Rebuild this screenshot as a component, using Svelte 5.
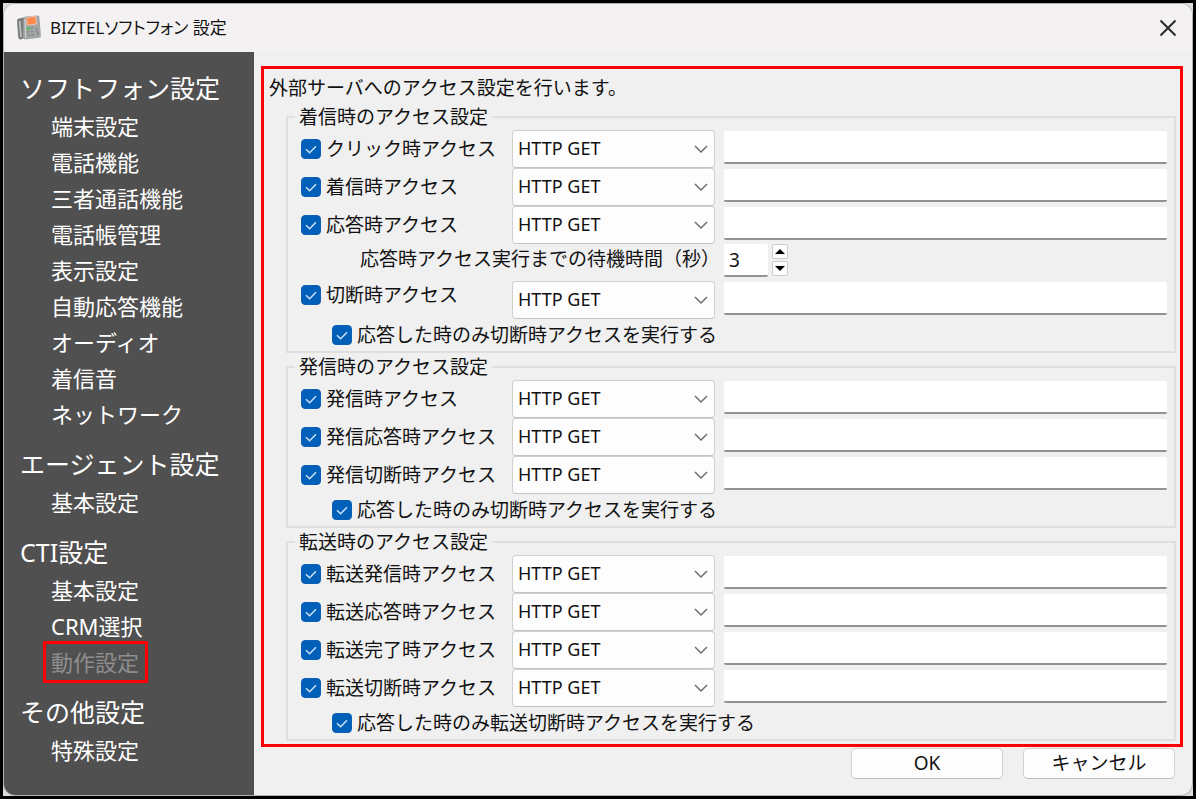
<script>
  const menu = [
    {
      title: 'ソフトフォン設定',
      items: ['端末設定', '電話機能', '三者通話機能', '電話帳管理', '表示設定', '自動応答機能', 'オーディオ', '着信音', 'ネットワーク']
    },
    { title: 'エージェント設定', items: ['基本設定'] },
    { title: 'CTI設定', items: ['基本設定', 'CRM選択', '動作設定'] },
    { title: 'その他設定', items: ['特殊設定'] }
  ];
  const current = '動作設定';

  const row = (label, extra = {}) => ({ label, on: true, method: 'HTTP GET', url: '', ...extra });

  let wait = $state(3);
  let groups = $state([
    {
      title: '着信時のアクセス設定',
      rows: [
        row('クリック時アクセス'),
        row('着信時アクセス'),
        row('応答時アクセス', { wait: true }),
        row('切断時アクセス', { raised: true })
      ],
      only: { label: '応答した時のみ切断時アクセスを実行する', on: true }
    },
    {
      title: '発信時のアクセス設定',
      rows: [row('発信時アクセス'), row('発信応答時アクセス'), row('発信切断時アクセス')],
      only: { label: '応答した時のみ切断時アクセスを実行する', on: true }
    },
    {
      title: '転送時のアクセス設定',
      rows: [row('転送発信時アクセス'), row('転送応答時アクセス'), row('転送完了時アクセス'), row('転送切断時アクセス')],
      only: { label: '応答した時のみ転送切断時アクセスを実行する', on: true }
    }
  ]);
</script>

{#snippet check(item)}
  <label class="check">
    <span class="box">
      <input type="checkbox" bind:checked={item.on} />
      <svg viewBox="0 0 20 20" aria-hidden="true"><path d="M5 10.3 L8.6 13.8 L15 7.2" /></svg>
    </span>
    <span>{item.label}</span>
  </label>
{/snippet}

<div class="frame">
  <div class="window">
    <header>
      <svg class="logo" viewBox="0 0 26 26" aria-hidden="true">
        <path d="M1 6 Q1 4 3 3.6 L8 2.4 L10 4 L10 22 L5 24.6 Q2.6 24.8 2.2 22 Z" fill="#777a7a" />
        <path d="M2.6 6.4 L4.6 5.8 L6 22 L4.2 22.6 Z" fill="#b9bbbb" />
        <path d="M9 1.6 L22 0.6 Q23.4 0.8 23.4 2.4 L25 21 Q25 22.6 23.6 22.8 L9 24.6 Q7.4 24.4 7.2 22.6 L7.4 4 Z" fill="#a3a6a6" />
        <path d="M8.8 4 L9.8 22.6" stroke="#d5d7d7" stroke-width="1" />
        <path d="M10.6 2.4 L19.8 1.2 L20.6 9 L11 10.2 Z" fill="#ff8a4c" stroke="#e7d0c3" stroke-width="0.8" />
        <path d="M11.4 17 l2.4 -0.3 M15 16.6 l2.4 -0.3 M11.6 20.4 l2.4 -0.3 M15.2 20 l2.4 -0.3 M15.4 13 l2 -0.3" stroke="#858989" stroke-width="1.3" />
        <path d="M11 13.8 l3.4 -0.5" stroke="#3fc254" stroke-width="2" />
        <path d="M20 13 l2.4 7" stroke="#858989" stroke-width="1.4" />
      </svg>
      <h1>BIZTELソフトフォン 設定</h1>
      <button class="close" type="button" aria-label="閉じる">
        <svg viewBox="0 0 18 18" aria-hidden="true"><path d="M1.5 1.5 L16.5 16.5 M16.5 1.5 L1.5 16.5" /></svg>
      </button>
    </header>

    <div class="body">
      <nav>
        {#each menu as section}
          <section>
            <h2>{section.title}</h2>
            <ul>
              {#each section.items as item}
                <li><a href="#top" class:current={item === current}>{item}</a></li>
              {/each}
            </ul>
          </section>
        {/each}
      </nav>

      <main>
        <div class="panel">
          <p>外部サーバへのアクセス設定を行います。</p>
          {#each groups as group}
            <fieldset>
              <legend>{group.title}</legend>
              {#each group.rows as r}
                <div class="row" class:raised={r.raised}>
                  {@render check(r)}
                  <span class="select">
                    <select bind:value={r.method} aria-label="{r.label} メソッド">
                      <option>HTTP GET</option>
                      <option>HTTP POST</option>
                    </select>
                    <svg viewBox="0 0 14 8" aria-hidden="true"><path d="M1 1 L7 7 L13 1" /></svg>
                  </span>
                  <input class="field" type="text" bind:value={r.url} aria-label="{r.label} URL" />
                </div>
                {#if r.wait}
                  <div class="wait">
                    <label for="wait">応答時アクセス実行までの待機時間（秒）</label>
                    <div class="spin">
                      <input id="wait" class="field" type="text" inputmode="numeric" bind:value={wait} />
                      <div class="steps">
                        <button type="button" aria-label="増やす" onclick={() => (wait = Number(wait) + 1)}>
                          <svg viewBox="0 0 10 5" aria-hidden="true"><path d="M5 0 L10 5 H0 Z" /></svg>
                        </button>
                        <button type="button" aria-label="減らす" onclick={() => (wait = Math.max(0, Number(wait) - 1))}>
                          <svg viewBox="0 0 10 5" aria-hidden="true"><path d="M0 0 H10 L5 5 Z" /></svg>
                        </button>
                      </div>
                    </div>
                  </div>
                {/if}
              {/each}
              <div class="only">{@render check(group.only)}</div>
            </fieldset>
          {/each}
        </div>
        <footer>
          <button type="button">OK</button>
          <button type="button">キャンセル</button>
        </footer>
      </main>
    </div>
  </div>
</div>

<style>
  :global(body) {
    margin: 0;
    background: #000;
  }

  .frame,
  .frame * {
    box-sizing: border-box;
  }

  .frame {
    display: flex;
    min-height: 100vh;
    border: 3px solid #000;
    background: #dcdcdc;
    color: #111;
    font-family: 'Noto Sans', 'Noto Sans CJK JP', sans-serif;
    font-size: 19px;
    line-height: 26px;
  }

  .frame input,
  .frame select,
  .frame button {
    font: inherit;
    color: inherit;
    margin: 0;
  }

  .window {
    flex: 1;
    display: flex;
    flex-direction: column;
    min-width: 0;
    border: 1px solid #b0b0b0;
    border-radius: 12px;
    overflow: hidden;
    background: #f0f0f0;
  }

  header {
    display: flex;
    align-items: center;
    gap: 8px;
    height: 48px;
    padding: 0 15px 0 12px;
    background: #f4f1f3;
  }

  .logo {
    width: 26px;
    height: 26px;
  }

  h1 {
    flex: 1;
    margin: 0;
    font-size: 17px;
    font-weight: 400;
    font-feature-settings: 'palt';
  }

  .close {
    display: flex;
    padding: 0;
    border: 0;
    background: none;
  }

  .close svg {
    width: 18px;
    height: 18px;
    fill: none;
    stroke: #2a2a2a;
    stroke-width: 2;
  }

  .body {
    flex: 1;
    display: flex;
  }

  nav {
    flex: none;
    width: 250px;
    padding: 16px 0 24px 16px;
    background: #505050;
    color: #fff;
  }

  section + section {
    margin-top: 12px;
  }

  h2 {
    margin: 0;
    font-size: 25px;
    font-weight: 400;
    line-height: 40px;
  }

  ul {
    margin: 0;
    padding: 0 0 0 26px;
    list-style: none;
  }

  li {
    display: flex;
    font-size: 22px;
    line-height: 36px;
  }

  li a {
    height: 36px;
    padding: 0 6px 0 5px;
    color: inherit;
    text-decoration: none;
  }

  .current {
    color: #8e8e8e;
    outline: 3px solid #f00;
  }

  main {
    flex: 1;
    min-width: 0;
    padding: 14px 9px 0 7px;
  }

  .panel {
    padding: 3px 4px 3px 22px;
    border: 3px solid #f00;
  }

  p {
    margin: 0 0 0 -17px;
    line-height: 32px;
  }

  fieldset {
    min-width: 0;
    margin: 0;
    padding: 0 7px 0 13px;
    border: 2px solid #dfdfdf;
  }

  fieldset + fieldset {
    margin-top: 1px;
  }

  legend {
    margin-left: -6px;
    padding: 0 4px;
  }

  .row {
    display: grid;
    grid-template-columns: 202px 203px minmax(0, 1fr);
    column-gap: 9px;
    align-items: center;
    height: 38px;
  }

  .check {
    display: flex;
    align-items: center;
    gap: 5px;
    line-height: 28px;
    white-space: nowrap;
  }

  .raised .check {
    align-self: start;
  }

  .box {
    display: grid;
    width: 20px;
    height: 20px;
  }

  .box input {
    grid-area: 1 / 1;
    appearance: none;
    width: 20px;
    height: 20px;
    border: 1px solid #8a8a8a;
    border-radius: 4px;
    background: #fff;
  }

  .box input:checked {
    border-color: #0f5fb5;
    background: #005fb8;
  }

  .box svg {
    grid-area: 1 / 1;
    z-index: 1;
    width: 20px;
    height: 20px;
    fill: none;
    stroke: #cfe2f5;
    stroke-width: 1.5;
    pointer-events: none;
  }

  .select {
    display: grid;
    align-items: center;
  }

  .select select {
    grid-area: 1 / 1;
    appearance: none;
    width: 100%;
    height: 38px;
    padding: 0 24px 2px 5px;
    border: 1px solid #d0d0d0;
    border-bottom-color: #c2c2c2;
    border-radius: 4px;
    background: #fdfdfd;
    font-size: 18px;
  }

  .select svg {
    grid-area: 1 / 1;
    justify-self: end;
    width: 14px;
    height: 8px;
    margin-right: 7px;
    fill: none;
    stroke: #707070;
    stroke-width: 1.5;
    pointer-events: none;
  }

  .field {
    width: 100%;
    height: 33px;
    padding: 0 5px;
    border: 0;
    border-bottom: 2px solid #929292;
    border-radius: 2px;
    background: #fff;
  }

  .row .field {
    align-self: start;
    margin-top: 1px;
  }

  .wait {
    display: grid;
    grid-template-columns: 419px minmax(0, 1fr);
    column-gap: 4px;
    height: 37px;
  }

  .wait label {
    justify-self: end;
    line-height: 30px;
    white-space: nowrap;
  }

  .spin {
    display: flex;
    gap: 4px;
  }

  .spin .field {
    width: 44px;
  }

  .steps {
    display: flex;
    flex-direction: column;
    gap: 2px;
  }

  .steps button {
    display: grid;
    place-items: center;
    width: 16px;
    height: 15px;
    padding: 0;
    border: 1px solid #cbcbcb;
    border-radius: 2px;
    background: #fdfdfd;
  }

  .steps svg {
    width: 10px;
    height: 5px;
  }

  .only {
    display: flex;
    align-items: center;
    height: 32px;
    padding-left: 31px;
  }

  footer {
    display: flex;
    justify-content: flex-end;
    gap: 20px;
    padding: 1px 8px 12px 0;
  }

  footer button {
    width: 152px;
    height: 31px;
    padding: 0 0 2px;
    border: 1px solid #d0d0d0;
    border-bottom-color: #bdbdbd;
    border-radius: 5px;
    background: #fdfdfd;
  }
</style>
